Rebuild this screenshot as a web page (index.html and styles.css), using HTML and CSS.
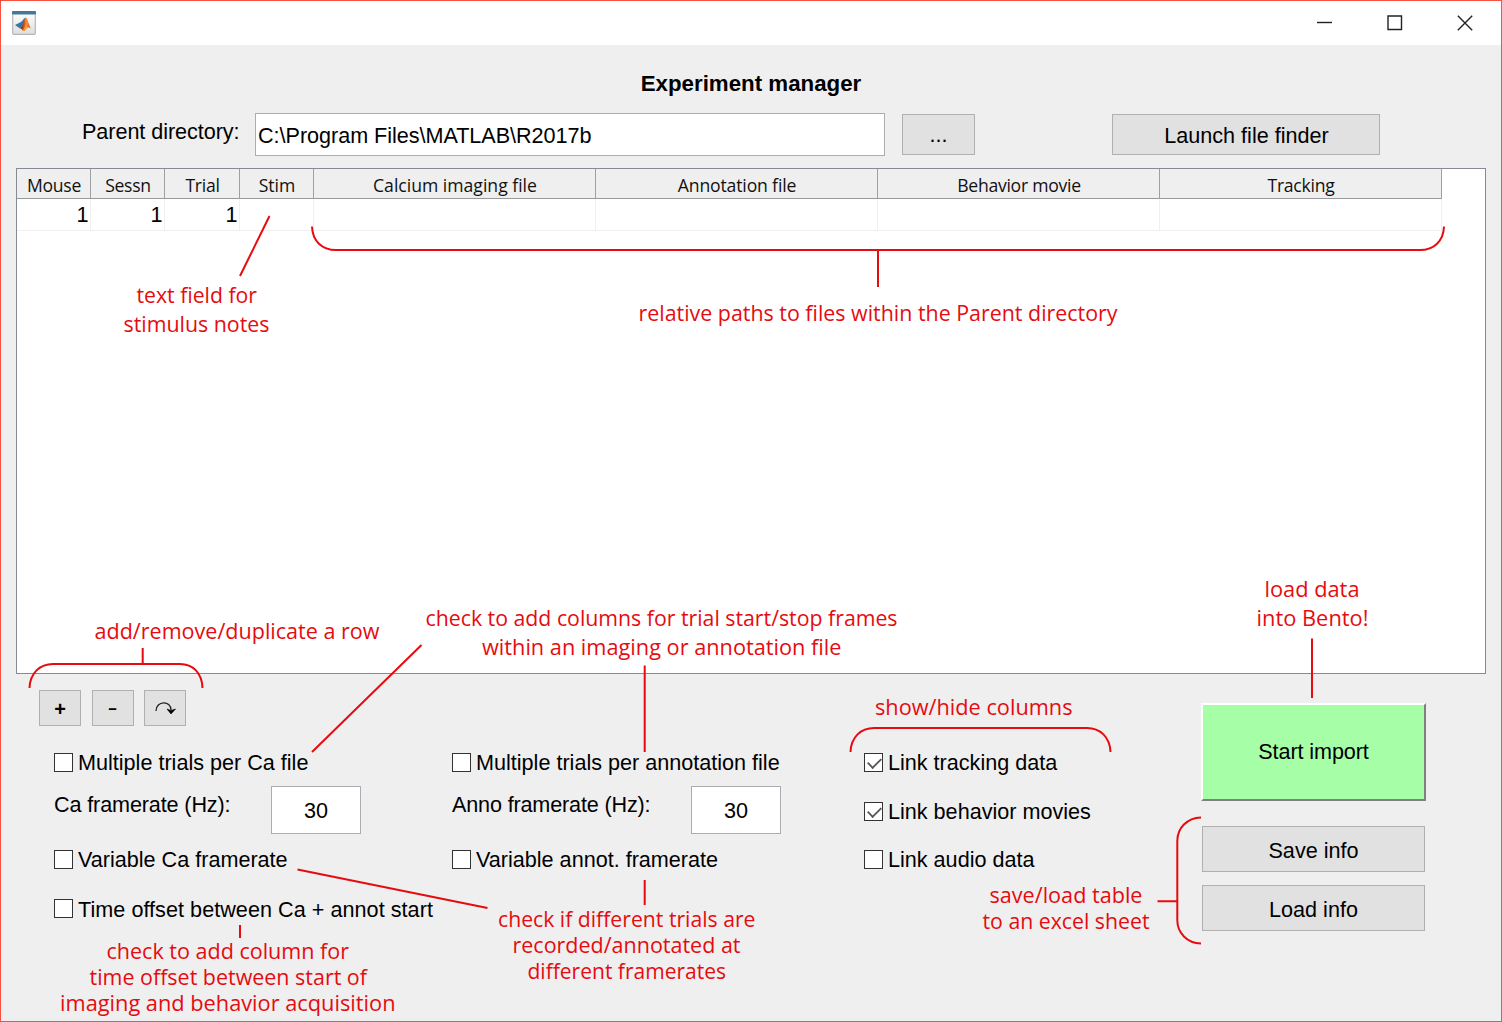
FILE: index.html
```html
<!DOCTYPE html>
<html lang="en">
<head>
<meta charset="utf-8">
<title>Experiment manager</title>
<link rel="stylesheet" href="styles.css">
</head>
<body>
<div class="window">
  <header class="titlebar">
    <svg class="app-icon" width="24" height="24" viewBox="0 0 24 24">
      <defs>
        <linearGradient id="frame" x1="0" y1="0" x2="0" y2="1"><stop offset="0" stop-color="#fff"/><stop offset="1" stop-color="#dedede"/></linearGradient>
        <linearGradient id="flame" x1="0" y1="0" x2="1" y2="0"><stop offset="0" stop-color="#6b1a22"/><stop offset=".4" stop-color="#dd5a1c"/><stop offset=".6" stop-color="#f09a35"/><stop offset="1" stop-color="#b8341a"/></linearGradient>
      </defs>
      <rect x=".7" y=".7" width="22.6" height="22.6" rx="1" fill="url(#frame)" stroke="#b4b7ba" stroke-width="1.2"/>
      <rect x="0" y="0" width="24" height="3.4" rx="1" fill="#47789c"/>
      <path d="M3 14l5-2.4c2-.6 3-3.600 5.500-5.100l-1.700 7-3.800 4z" fill="#2f78ab"/>
      <path d="M8 17.300c2-1 3.300-7.300 5.800-10.800 2 .8 3 8.500 5.600 11.500-2.500-2.500-4.200-1.500-6 1-1 1.200-2.300 1.200-2.900.3-.6-1-1.300-1.800-2.500-2z" fill="url(#flame)"/>
      <path d="M10.600 19.300c1.300-1 2.700-3.500 3.200-6l1 3.500c-1.200 1.500-2 3.400-3.600 3.400z" fill="#f2a237"/>
    </svg>
    <div class="controls">
      <svg width="16" height="16" viewBox="0 0 16 16"><path d="M1 7.500h15" /></svg>
      <svg width="16" height="16" viewBox="0 0 16 16"><path d="M1 1h13.500v13.500H1z"/></svg>
      <svg width="16" height="16" viewBox="0 0 16 16"><path d="M.8.8l14.400 14.400M15.200.8L.8 15.200"/></svg>
    </div>
  </header>

  <main class="content">
    <h1 class="title">Experiment manager</h1>
    <div class="directory">
      <span class="directory-label">Parent directory:</span>
      <div class="field path">C:\Program Files\MATLAB\R2017b</div>
      <div class="button browse">...</div>
      <div class="button finder">Launch file finder</div>
    </div>

    <div class="table">
      <div class="table-row head">
        <div class="tight">Mouse</div><div class="tight">Sessn</div><div class="tight">Trial</div><div>Stim</div><div>Calcium imaging file</div><div class="semi">Annotation file</div><div class="tight">Behavior movie</div><div class="tight">Tracking</div>
      </div>
      <div class="table-row record">
        <div>1</div><div>1</div><div>1</div><div></div><div></div><div></div><div></div><div></div>
      </div>
    </div>

    <div class="panel">
      <div class="options">
        <div class="row-buttons">
          <div class="button small plus">+</div>
          <div class="button small minus"><span>-</span></div>
          <div class="button small"><svg width="22" height="18" viewBox="0 0 22 18"><path d="M2 12C2 1.500 17 1 17 11" fill="none" stroke="#222" stroke-width="1.300"/><path d="M13 10l4 5 4.500-5-4.500 1.500z" fill="#000" stroke="#000" stroke-width=".6"/></svg></div>
        </div>
        <div class="grid">
          <div class="check"><i class="box"></i><span>Multiple trials per Ca file</span></div>
          <div class="check"><i class="box"></i><span>Multiple trials per annotation file</span></div>
          <div class="check"><i class="box on"></i><span>Link tracking data</span></div>
          <div class="rate"><span>Ca framerate (Hz):</span><div class="field number">30</div></div>
          <div class="rate anno"><span>Anno framerate (Hz):</span><div class="field number">30</div></div>
          <div class="check"><i class="box on"></i><span>Link behavior movies</span></div>
          <div class="check"><i class="box"></i><span>Variable Ca framerate</span></div>
          <div class="check"><i class="box"></i><span>Variable annot. framerate</span></div>
          <div class="check"><i class="box"></i><span>Link audio data</span></div>
          <div class="check wide"><i class="box"></i><span>Time offset between Ca + annot start</span></div>
        </div>
      </div>
      <div class="actions">
        <div class="start">Start import</div>
        <div class="button save">Save info</div>
        <div class="button load">Load info</div>
      </div>
    </div>
  </main>

  <svg class="notes" width="1502" height="1022" viewBox="0 0 1502 1022">
    <g class="lines">
      <path d="M269.500 216L240 276"/>
      <path d="M312 226.500C312.500 241 322 250 336 250H1420C1434 250 1443.500 241 1444 226.500M878 250V287"/>
      <path d="M29.500 688C30 673 40 664 53 664H180C193 664 202 673 202.500 688M142.700 648V664"/>
      <path d="M421.500 645L312 752M644.700 665.500V752"/>
      <path d="M297.500 869.500L487.500 908M644.700 880V905M240 925V938"/>
      <path d="M850.500 752C851 737 861 728 874 728H1087C1100 728 1110 737 1110.500 752"/>
      <path d="M1312 638.500V698"/>
      <path d="M1201 817.500C1187 818 1177.300 828 1177.300 841V920C1177.300 933 1187 943 1201 943.500M1157.500 901.300H1177"/>
    </g>
    <g class="labels">
      <text x="136.500" y="303" textLength="120.500" lengthAdjust="spacingAndGlyphs">text field for</text>
      <text x="123.500" y="332" textLength="146" lengthAdjust="spacingAndGlyphs">stimulus notes</text>
      <text x="638.500" y="321" textLength="479" lengthAdjust="spacingAndGlyphs">relative paths to files within the Parent directory</text>
      <text x="94.500" y="639" textLength="285" lengthAdjust="spacingAndGlyphs">add/remove/duplicate a row</text>
      <text x="425.500" y="626" textLength="472" lengthAdjust="spacingAndGlyphs">check to add columns for trial start/stop frames</text>
      <text x="482" y="655" textLength="359.500" lengthAdjust="spacingAndGlyphs">within an imaging or annotation file</text>
      <text x="1264.500" y="597" textLength="95" lengthAdjust="spacingAndGlyphs">load data</text>
      <text x="1256.500" y="626" textLength="112" lengthAdjust="spacingAndGlyphs">into Bento!</text>
      <text x="875" y="715" textLength="197.500" lengthAdjust="spacingAndGlyphs">show/hide columns</text>
      <text x="989.500" y="903" textLength="153" lengthAdjust="spacingAndGlyphs">save/load table</text>
      <text x="982.500" y="929" textLength="167" lengthAdjust="spacingAndGlyphs">to an excel sheet</text>
      <text x="498" y="927" textLength="257.500" lengthAdjust="spacingAndGlyphs">check if different trials are</text>
      <text x="512.500" y="953" textLength="228" lengthAdjust="spacingAndGlyphs">recorded/annotated at</text>
      <text x="527.500" y="979" textLength="198.500" lengthAdjust="spacingAndGlyphs">different framerates</text>
      <text x="106.500" y="959" textLength="242.500" lengthAdjust="spacingAndGlyphs">check to add column for</text>
      <text x="89.500" y="985" textLength="277.500" lengthAdjust="spacingAndGlyphs">time offset between start of</text>
      <text x="60" y="1011" textLength="335.500" lengthAdjust="spacingAndGlyphs">imaging and behavior acquisition</text>
    </g>
  </svg>
</div>
</body>
</html>
```
FILE: styles.css
```css
* { box-sizing: border-box; }
body { margin: 0; font-family: "Liberation Sans", Arial, sans-serif; font-size: 21.6px; line-height: 24px; color: #000; }
.window { position: relative; width: 1502px; height: 1022px; background: #efefef; border: 1px solid #fa5040; overflow: hidden; white-space: nowrap; }
.titlebar { height: 44px; background: #fff; display: flex; justify-content: space-between; align-items: center; padding: 0 28px 0 11px; }
.controls { display: flex; gap: 54.500px; }
.controls svg { fill: none; stroke: #222; stroke-width: 1.400; }

.content { display: flex; flex-direction: column; padding: 0 15px; }
.title { margin: 27px 0 0; text-align: center; font-size: 22.300px; line-height: 24px; }
.directory { display: flex; align-items: flex-start; margin-top: 17px; height: 55px; padding-left: 66px; }
.directory-label { width: 173px; padding-top: 7px; letter-spacing: -.05px; }
.field { background: #fff; border: 1.500px solid #abadb3; display: flex; align-items: center; }
.path { width: 630px; height: 43px; padding: 2px 0 0 2px; letter-spacing: -.03px; }
.button { background: #e1e1e1; border: 1.500px solid #b0b0b0; display: flex; align-items: center; justify-content: center; }
.browse { width: 73px; height: 41px; margin: 1px 0 0 17px; }
.finder { width: 268px; height: 41px; margin: 1px 0 0 137px; padding: 2px 0 0 1px; }

.table { width: 1470px; height: 506px; background: #fff; border: 1px solid #868a94; }
.table-row { display: grid; grid-template-columns: 74px 74px 75px 74px 282px 282px 282px 282px; width: 1425px; }
.head { height: 30px; background: #efefef; font: 17.600px/33px "Open Sans", "Noto Sans", sans-serif; text-align: center; border-bottom: 1px solid #96989c; color: #111; }
.head div { border-right: 1px solid #a0a0a4; padding-left: 1px; }
.head .tight { letter-spacing: -.27px; }
.head .semi { letter-spacing: -.15px; }
.record { height: 32px; border-bottom: 1px solid #f0f0f0; text-align: right; line-height: 32px; }
.record div { border-right: 1px solid #f0f0f0; padding-right: 1.500px; }

.panel { display: flex; padding: 16px 0 0 23px; }
.options { width: 1162px; }
.row-buttons { display: flex; gap: 10.500px; }
.small { width: 42px; height: 36px; }
.plus { font-weight: bold; font-size: 20px; padding-top: 2px; }
.minus span { transform: scaleX(1.4); }
.grid { display: grid; grid-template-columns: 398px 412px auto; grid-template-rows: 48px 50px 48px 50px; margin-top: 12px; padding-left: 15px; }
.check { display: flex; align-items: center; gap: 5px; height: 48px; }
.check:nth-child(n+7) { height: 46px; }
.check span { padding-top: 2px; }
.grid .check:nth-child(6) { height: 50px; }
.grid .check.wide { grid-column: 1 / 3; height: 48px; }
.wide span { padding-top: 3px; letter-spacing: .04px; }
.box { width: 19px; height: 19px; background: #fff; border: 1.500px solid #333; }
.box.on::after { content: ""; display: block; width: 13px; height: 7px; margin: 3px 0 0 2px; border-left: 2px solid #555; border-bottom: 2px solid #555; transform: rotate(-45deg) scale(.88); }
.rate { display: flex; align-items: center; height: 48px; }
.rate span { width: 217px; padding-bottom: 11px; letter-spacing: -.13px; }
.anno span { width: 239px; letter-spacing: -.16px; }
.number { width: 90px; height: 48px; justify-content: center; padding-top: 1px; }
.actions { padding-top: 13px; width: 226px; }
.start { width: 225px; height: 98px; background: #a6ffa6; border: 2px solid; border-color: #fff #808080 #808080 #fff; display: flex; align-items: center; justify-content: center; letter-spacing: -.1px; }
.save, .load { width: 223px; height: 46px; margin: 25px 0 0 1px; padding-top: 3px; }
.load { margin-top: 13px; }

.notes { position: absolute; left: -1px; top: -1px; }
.lines path { fill: none; stroke: #e60b0f; stroke-width: 2; }
.labels { font: 22px "Open Sans", "Noto Sans", sans-serif; fill: #e60b0f; }
```
